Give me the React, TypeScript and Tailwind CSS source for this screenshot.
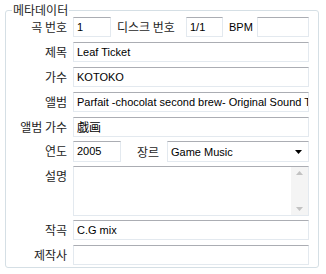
import React from "react";

const lbl = "w-[61px] shrink-0 text-right text-[12px] leading-[20px] text-[#1e1e1e] [font-family:'Noto_Sans_CJK_KR',sans-serif]";
const inp = "h-[20px] border border-[#e3e9ef] border-t-[#abadb3] bg-white px-[3px] text-[11px] leading-[18px] text-black whitespace-nowrap overflow-hidden [font-family:'Liberation_Sans',Arial,sans-serif]";

function Row({ label, children, h = "h-[20px]", mt = "" }: { label: string; children: React.ReactNode; h?: string; mt?: string }) {
  return (
    <div className={`flex items-start gap-[6px] ${h} ${mt}`}>
      <div className={lbl}>{label}</div>
      <div className="flex-1 min-w-0 flex items-center h-full">{children}</div>
    </div>
  );
}

export default function App() {
  return (
    <div className="w-[326px] h-[274px] bg-white pt-[2px] pl-[5px] overflow-hidden">
      <fieldset className="w-[314px] min-w-0 h-[266px] border border-[#d5dfe5] rounded-[3px] m-0 pl-0 pr-[9px] pt-0 pb-0">
        <legend className="ml-[6px] px-[1px] text-[12px] leading-[16px] text-[#1e1e1e] [font-family:'Noto_Sans_CJK_KR',sans-serif]">메타데이터</legend>
        <div className="flex flex-col mt-[-1px]">
          <Row label="곡 번호">
            <div className={`${inp} w-[38px] shrink-0`}>1</div>
            <div className="ml-[6px] w-[64px] shrink-0 text-[12px] leading-[20px] whitespace-nowrap [font-family:'Noto_Sans_CJK_KR',sans-serif] text-[#1e1e1e]">디스크 번호</div>
            <div className={`${inp} w-[37px] ml-[5px] shrink-0`}>1/1</div>
            <div className="ml-[6px] w-[28px] shrink-0 text-[11px] leading-[20px] [font-family:'Liberation_Sans',Arial,sans-serif]">BPM</div>
            <div className={`${inp} flex-1`}></div>
          </Row>
          <Row label="제목" mt="mt-[5px]"><div className={`${inp} w-full`}>Leaf Ticket</div></Row>
          <Row label="가수" mt="mt-[5px]"><div className={`${inp} w-full`}>KOTOKO</div></Row>
          <Row label="앨범" mt="mt-[5px]"><div className={`${inp} w-full`}>Parfait -chocolat second brew- Original Sound Track</div></Row>
          <Row label="앨범 가수" mt="mt-[5px]"><div className={`${inp} w-full [font-family:'Noto_Sans_CJK_SC',sans-serif] text-[12px]`}>戯画</div></Row>
          <Row label="연도" h="h-[21px]" mt="mt-[4px]">
            <div className={`${inp} w-[48px] h-[21px] shrink-0`}>2005</div>
            <div className="ml-[16px] w-[25px] shrink-0 text-[12px] leading-[20px] whitespace-nowrap [font-family:'Noto_Sans_CJK_KR',sans-serif] text-[#1e1e1e]">장르</div>
            <div className={`${inp} flex-1 ml-[5px] h-[21px] flex items-center justify-between`}>
              <span>Game Music</span>
              <svg width="7" height="4" viewBox="0 0 7 4" className="mr-[3px]"><path d="M0 0H7L3.5 4Z" fill="#000" /></svg>
            </div>
          </Row>
          <Row label="설명" h="h-[50px]" mt="mt-[4px]">
            <div className="w-full h-[50px] border border-[#e3e9ef] border-t-[#abadb3] bg-white flex justify-end">
              <div className="w-[17px] h-full bg-[#f4f4f4] flex flex-col justify-between items-center py-[4px]">
                <svg width="7" height="4" viewBox="0 0 7 4"><path d="M0 4H7L3.5 0Z" fill="#c2c2c2" /></svg>
                <svg width="7" height="4" viewBox="0 0 7 4"><path d="M0 0H7L3.5 4Z" fill="#c2c2c2" /></svg>
              </div>
            </div>
          </Row>
          <Row label="작곡" mt="mt-[4px]"><div className={`${inp} w-full`}>C.G mix</div></Row>
          <Row label="제작사" mt="mt-[5px]"><div className={`${inp} w-full`}></div></Row>
        </div>
      </fieldset>
    </div>
  );
}
